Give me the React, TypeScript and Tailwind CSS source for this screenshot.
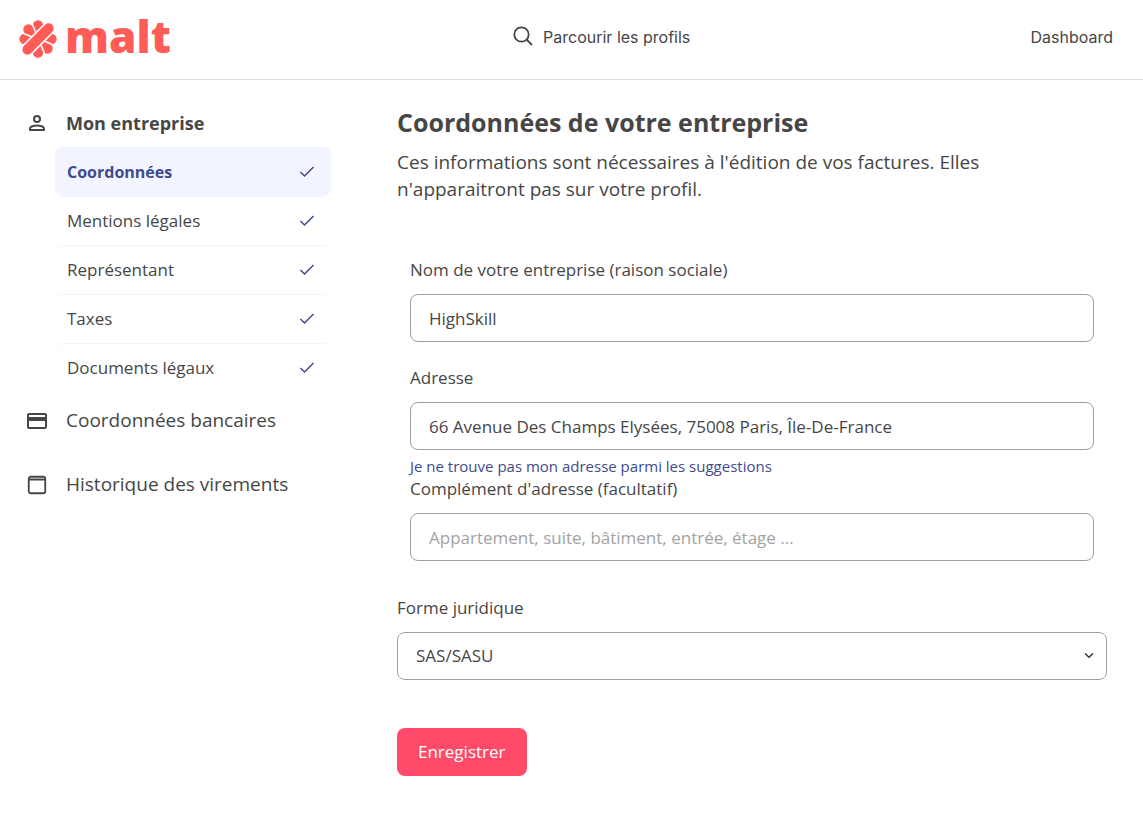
import React from 'react';

const CheckIcon = () => (
  <svg className="w-4 h-4 shrink-0" viewBox="0 0 16 16" fill="none" stroke="#414b8c" strokeWidth="1.5">
    <path d="M1.5 8l4 4L14.5 3" />
  </svg>
);

const UserIcon = () => (
  <svg className="w-6 h-6 shrink-0" viewBox="0 0 24 24" fill="none" stroke="#464646" strokeWidth="2">
    <circle cx="12" cy="8" r="3" />
    <path d="M5 19v-1.5c0-2 4-3 7-3s7 1 7 3V19z" strokeLinejoin="round" />
  </svg>
);

const CardIcon = () => (
  <svg className="w-6 h-6 shrink-0" viewBox="0 0 24 24" fill="#464646">
    <path d="M20 5H4c-1.1 0-2 .9-2 2v12c0 1.1.9 2 2 2h16c1.1 0 2-.9 2-2V7c0-1.1-.9-2-2-2zm0 14H4v-6h16zm0-10H4V7h16z" />
  </svg>
);

const CalendarIcon = () => (
  <svg className="w-6 h-6 shrink-0" viewBox="0 0 24 24" fill="none" stroke="#464646">
    <rect x="3.75" y="4.75" width="16.5" height="16.5" rx="2" strokeWidth="1.8" />
    <path d="M4 7.5h16" strokeWidth="2" />
  </svg>
);

// six petals, the two missing ones are the ends of the diagonal bar
const petals = [0, 90, 135, 180, 270, 315];

const Logo = () => (
  <a href="#" aria-label="malt" className="flex items-center gap-2 pt-1 text-[#ff5b57]">
    <svg className="w-[38px] h-[38px]" viewBox="2 2 34 34">
      {petals.map((angle) => (
        <path
          key={angle}
          d="M19 20L13.6 7A5.4 5.4 0 0 1 24.4 7Z"
          transform={`rotate(${angle} 19 19)`}
          fill="currentColor"
          stroke="#fff"
          strokeWidth="1.4"
        />
      ))}
      <path d="M9.5 28.5l19-19" stroke="#fff" strokeWidth="12" />
      <path d="M9.5 28.5l19-19" stroke="currentColor" strokeWidth="9" strokeLinecap="round" />
    </svg>
    <span className="font-['Open_Sans',sans-serif] font-extrabold text-[44px] leading-[44px] pb-1.5">malt</span>
  </a>
);

const companyLinks = ['Coordonnées', 'Mentions légales', 'Représentant', 'Taxes', 'Documents légaux'];

const inputClass =
  'block w-full h-12 rounded-lg border border-[#a0a0a0] bg-white px-[18px] text-[17px] text-[#464646] placeholder:text-[#a3a3a3] outline-none';

const labelClass = 'block mb-3 text-[17px] leading-6';

const App = () => {
  return (
    <div className="bg-white text-[#464646] font-['Open_Sans',sans-serif]">
      <header className="flex justify-between items-center h-20 border-b border-[#dcdcd6] pl-[19px] pr-[30px] pb-[5px] font-['Inter',sans-serif] text-base">
        <Logo />
        <a href="#" className="flex items-center gap-2">
          <svg className="w-6 h-6" viewBox="0 0 24 24" fill="none" stroke="#464646" strokeWidth="1.8">
            <circle cx="10.5" cy="9.5" r="7.2" />
            <path d="M15.5 14.5l5.5 5.5" />
          </svg>
          Parcourir les profils
        </a>
        <a href="#">Dashboard</a>
      </header>

      <div className="flex gap-[66px] pr-9 pb-10">
        <nav className="w-[331px] shrink-0 pt-[31px] pl-[25px] text-[19px] leading-6">
          <a href="#" className="flex gap-[17px] text-lg leading-6 font-bold">
            <UserIcon />
            Mon entreprise
          </a>
          <ul className="mt-3 ml-[30px] text-[17px]">
            {companyLinks.map((label, i) => (
              <li key={label}>
                <a
                  href="#"
                  className={
                    i === 0
                      ? 'flex items-center justify-between h-[49px] rounded-lg px-3 pr-4 bg-[#f2f5ff] text-base font-bold text-[#414b8c]'
                      : 'flex items-center justify-between h-[49px] rounded-lg px-3 pr-4 border-t border-[#f2f5ff]'
                  }
                >
                  {label}
                  <CheckIcon />
                </a>
              </li>
            ))}
          </ul>
          <a href="#" className="flex gap-[17px] mt-4">
            <CardIcon />
            Coordonnées bancaires
          </a>
          <a href="#" className="flex gap-[17px] mt-10">
            <CalendarIcon />
            Historique des virements
          </a>
        </nav>

        <main className="flex-1 min-w-0 pt-[26px]">
          <h1 className="text-[25px] leading-8 font-bold">Coordonnées de votre entreprise</h1>
          <p className="mt-[11px] max-w-[600px] text-[19px] leading-[27px]">
            Ces informations sont nécessaires à l'édition de vos factures. Elles n'apparaitront pas sur votre profil.
          </p>

          <form className="mt-[55px]" onSubmit={(e) => e.preventDefault()}>
            <div className="px-[13px]">
              <label htmlFor="company" className={labelClass}>Nom de votre entreprise (raison sociale)</label>
              <input id="company" type="text" defaultValue="HighSkill" className={inputClass} />

              <label htmlFor="address" className={`${labelClass} mt-6`}>Adresse</label>
              <input
                id="address"
                type="text"
                defaultValue="66 Avenue Des Champs Elysées, 75008 Paris, Île-De-France"
                className={inputClass}
              />
              <a href="#" className="block pt-1.5 pb-px text-[15px] leading-5 text-[#414b8c]">
                Je ne trouve pas mon adresse parmi les suggestions
              </a>

              <label htmlFor="address2" className={labelClass}>Complément d'adresse (facultatif)</label>
              <input
                id="address2"
                type="text"
                placeholder="Appartement, suite, bâtiment, entrée, étage ..."
                className={inputClass}
              />
            </div>

            <label htmlFor="legal" className={`${labelClass} mt-[35px]`}>Forme juridique</label>
            <div className="relative">
              <select id="legal" defaultValue="SAS/SASU" className={`${inputClass} appearance-none`}>
                <option>SAS/SASU</option>
              </select>
              <svg
                className="absolute right-[13px] top-[18px] w-[10px] h-[10px] pointer-events-none"
                viewBox="0 0 10 10"
                fill="none"
                stroke="#333"
                strokeWidth="1.5"
              >
                <path d="M1 3.5L5 7.2l4-3.7" />
              </svg>
            </div>

            <button type="submit" className="mt-12 h-12 px-[21px] rounded-lg bg-[#ff4a69] text-[17px] text-white">
              Enregistrer
            </button>
          </form>
        </main>
      </div>
    </div>
  );
};

export default App;
